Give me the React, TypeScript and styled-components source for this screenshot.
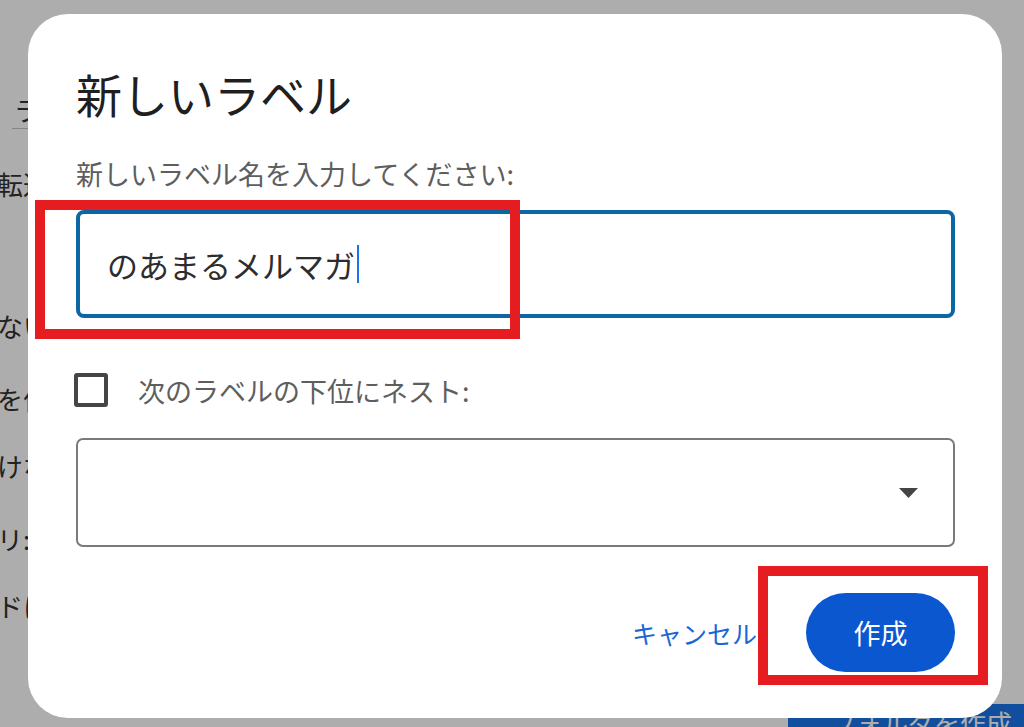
import React from "react";
import styled, { createGlobalStyle } from "styled-components";

const GlobalStyle = createGlobalStyle`
  html, body { margin: 0; padding: 0; }
  body {
    width: 1024px;
    height: 727px;
    overflow: hidden;
    font-family: "Noto Sans CJK JP", "Noto Sans", sans-serif;
    background: #ffffff;
  }
`;

const Screen = styled.div`
  position: relative;
  width: 1024px;
  height: 727px;
  overflow: hidden;
  background: #ffffff;
`;

const Page = styled.div`
  display: flex;
  flex-direction: column;
  height: 727px;
  color: #333333;
  font-size: 26px;
`;

const PageLine = styled.div<{ $top: number }>`
  margin-top: ${(p) => p.$top}px;
  margin-left: -3px;
  height: 30px;
  line-height: 30px;
  white-space: nowrap;
`;

const PageTab = styled.div`
  margin-top: 95px;
  margin-left: 12px;
  width: 120px;
  height: 30px;
  line-height: 30px;
  padding-left: 2px;
  padding-bottom: 3px;
  border-bottom: 1px solid #c4c4c4;
  white-space: nowrap;
`;

const PageButton = styled.div`
  margin-top: 83px;
  margin-left: 788px;
  width: 260px;
  height: 60px;
  flex-shrink: 0;
  background: #1a73e8;
  color: #ffffff;
  font-size: 26px;
  line-height: 30px;
  padding: 4px 0 0 42px;
  box-sizing: border-box;
  white-space: nowrap;
`;

const Overlay = styled.div`
  position: absolute;
  inset: 0;
  background: rgba(0, 0, 0, 0.32);
  padding: 14px 0 0 28px;
  box-sizing: border-box;
`;

const Dialog = styled.div`
  width: 974px;
  height: 704px;
  box-sizing: border-box;
  background: #ffffff;
  border-radius: 40px;
  padding: 49px 47px 0 48px;
  display: flex;
  flex-direction: column;
`;

const Title = styled.h1`
  margin: 0;
  font-size: 46px;
  font-weight: 400;
  line-height: 60px;
  color: #1f1f1f;
`;

const Prompt = styled.div`
  margin-top: 33px;
  font-size: 27px;
  line-height: 36px;
  color: #5e5e5e;
`;

const TextField = styled.div`
  margin-top: 18px;
  height: 108px;
  box-sizing: border-box;
  border: 4px solid #0b66a3;
  border-radius: 8px;
  padding-left: 27px;
  display: flex;
  align-items: center;
  font-size: 31px;
  color: #2d2d2d;
`;

const Caret = styled.span`
  display: inline-block;
  width: 2px;
  height: 38px;
  margin-left: 2px;
  background: #1a73e8;
`;

const CheckRow = styled.label`
  margin-top: 55px;
  height: 34px;
  display: flex;
  align-items: center;
  gap: 30px;
  font-size: 27px;
  color: #5e5e5e;
`;

const CheckBox = styled.span`
  width: 34px;
  height: 34px;
  box-sizing: border-box;
  border: 4px solid #454545;
  border-radius: 3px;
  margin-left: -2px;
  flex-shrink: 0;
`;

const Select = styled.div`
  margin-top: 31px;
  height: 109px;
  box-sizing: border-box;
  border: 2px solid #7a7a7a;
  border-radius: 7px;
  display: flex;
  align-items: center;
  justify-content: flex-end;
  padding-right: 35px;
`;

const Actions = styled.div`
  margin-top: 46px;
  display: flex;
  align-items: center;
  justify-content: flex-end;
  gap: 49px;
`;

const TextButton = styled.span`
  font-size: 25px;
  line-height: 34px;
  color: #1a66d6;
`;

const PrimaryButton = styled.span`
  width: 149px;
  height: 79px;
  border-radius: 40px;
  background: #0b57d0;
  color: #ffffff;
  font-size: 27px;
  display: flex;
  align-items: center;
  justify-content: center;
`;

const Marker = styled.div<{ $x: number; $y: number; $w: number; $h: number }>`
  position: absolute;
  left: ${(p) => p.$x}px;
  top: ${(p) => p.$y}px;
  width: ${(p) => p.$w}px;
  height: ${(p) => p.$h}px;
  box-sizing: border-box;
  border: 10px solid #e51c20;
`;

export default function App() {
  return (
    <>
      <GlobalStyle />
      <Screen>
        <Page>
          <PageTab>ラベル</PageTab>
          <PageLine $top={40}>転送</PageLine>
          <PageLine $top={112}>ない</PageLine>
          <PageLine $top={43}>を作</PageLine>
          <PageLine $top={37}>けな</PageLine>
          <PageLine $top={43}>リ:</PageLine>
          <PageLine $top={37}>ドに</PageLine>
          <PageButton>フォルダを作成</PageButton>
        </Page>
        <Overlay>
          <Dialog>
            <Title>新しいラベル</Title>
            <Prompt>新しいラベル名を入力してください:</Prompt>
            <TextField>
              のあまるメルマガ
              <Caret />
            </TextField>
            <CheckRow>
              <CheckBox />
              次のラベルの下位にネスト:
            </CheckRow>
            <Select>
              <svg width="19" height="10" viewBox="0 0 19 10">
                <polygon points="0,0 19,0 9.5,10" fill="#444444" />
              </svg>
            </Select>
            <Actions>
              <TextButton>キャンセル</TextButton>
              <PrimaryButton>作成</PrimaryButton>
            </Actions>
          </Dialog>
        </Overlay>
        <Marker $x={35} $y={200} $w={485} $h={139} />
        <Marker $x={758} $y={566} $w={230} $h={119} />
      </Screen>
    </>
  );
}
